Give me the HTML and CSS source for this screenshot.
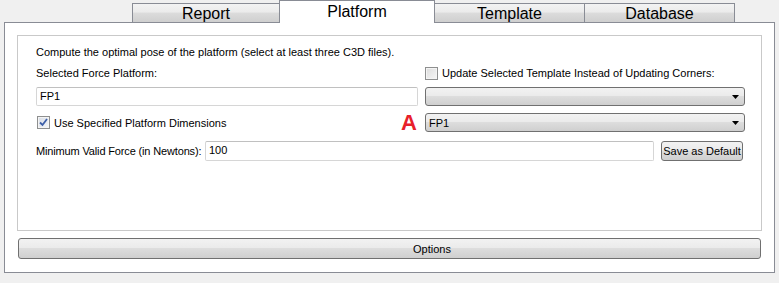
FILE: index.html
```html
<!DOCTYPE html>
<html>
<head>
<meta charset="utf-8">
<link rel="stylesheet" href="styles.css">
</head>
<body>
<div class="tabs">
  <div class="tab">Report</div>
  <div class="tab active">Platform</div>
  <div class="tab">Template</div>
  <div class="tab">Database</div>
</div>
<div class="pane">
  <div class="group">
    <div class="intro">Compute the optimal pose of the platform (select at least three C3D files).</div>
    <div class="grid">
      <div class="label">Selected Force Platform:</div>
      <label class="check"><span class="box"></span>Update Selected Template Instead of Updating Corners:</label>
      <div class="input">FP1</div>
      <div class="combo"><span></span><svg width="7" height="4" viewBox="0 0 7 4"><path d="M0 0H7L3.5 4Z" fill="#000"/></svg></div>
      <div class="leftrow">
        <label class="check"><span class="box checked"><svg width="11" height="11" viewBox="0 0 11 11"><path d="M2 5.5L4.5 8L9 2" fill="none" stroke="#3d5fa8" stroke-width="1.8"/></svg></span>Use Specified Platform Dimensions</label>
        <span class="marker">A</span>
      </div>
      <div class="combo"><span>FP1</span><svg width="7" height="4" viewBox="0 0 7 4"><path d="M0 0H7L3.5 4Z" fill="#000"/></svg></div>
    </div>
    <div class="forcerow">
      <span class="label">Minimum Valid Force (in Newtons):</span>
      <div class="input wide">100</div>
      <button class="btn">Save as Default</button>
    </div>
  </div>
  <button class="options">Options</button>
</div>
</body>
</html>
```

FILE: styles.css
```css
html, body {
  margin: 0;
  padding: 0;
}
body {
  background: #f0f0f0;
  font-family: "Liberation Sans", Arial, sans-serif;
  font-size: 11px;
  color: #000;
  width: 779px;
  height: 283px;
  overflow: hidden;
}
.tabs {
  display: flex;
  align-items: flex-end;
  height: 22px;
  padding-left: 132px;
  position: relative;
  z-index: 1;
}
.tab {
  box-sizing: border-box;
  width: 151px;
  height: 19px;
  margin-right: -1px;
  border: 1px solid #898c95;
  border-bottom: none;
  background: linear-gradient(#f3f3f3 0%, #ebebeb 45%, #dcdcdc 50%, #cfcfcf 100%);
  font-size: 16px;
  line-height: 19px;
  text-align: center;
  color: #000;
}
.tab:first-child { width: 148px; }
.tab.active {
  width: 156px;
  height: 23px;
  line-height: 22px;
  background: #fff;
  margin-bottom: -1px;
  position: relative;
}
.tab:last-child { width: 151px; }
.pane {
  box-sizing: border-box;
  margin: 0 4px;
  height: 251px;
  border: 1px solid #898c95;
  background: #fff;
  padding: 12px 12px 0 12px;
}
.group {
  box-sizing: border-box;
  height: 196px;
  border: 1px solid #c9c9c9;
  padding: 9px 15px 0 18px;
}
.intro {
  height: 17px;
  line-height: 14px;
}
.grid {
  display: grid;
  grid-template-columns: 382px 320px;
  column-gap: 7px;
  grid-template-rows: 22px 19px 23px;
  row-gap: 3px;
  align-items: center;
}
.label {
  white-space: nowrap;
}
.check {
  display: flex;
  align-items: center;
  gap: 4px;
  white-space: nowrap;
}
.box {
  box-sizing: border-box;
  width: 13px;
  height: 13px;
  border: 1px solid #8e8f8f;
  background: linear-gradient(135deg, #dcdcdc, #f6f6f6);
  display: flex;
  align-items: center;
  justify-content: center;
  box-shadow: inset 0 0 0 1px #f4f4f4;
}
.box.checked {
  background: linear-gradient(135deg, #d8dde6, #f4f6f9);
}
.input {
  box-sizing: border-box;
  height: 19px;
  border: 1px solid #d6d6d6;
  border-top-color: #c0c0c0;
  border-radius: 2px;
  background: #fff;
  padding-left: 3px;
  line-height: 17px;
}
.combo {
  box-sizing: border-box;
  height: 19px;
  border: 1px solid #707070;
  border-radius: 3px;
  background: linear-gradient(#f2f2f2 0%, #ebebeb 45%, #dddddd 50%, #cfcfcf 100%);
  display: flex;
  align-items: center;
  justify-content: space-between;
  padding: 0 5px 0 3px;
}
.grid > :nth-child(5),
.grid > :nth-child(6) {
  align-self: end;
}
.leftrow {
  height: 19px;
  display: flex;
  align-items: center;
  justify-content: space-between;
  padding-left: 1px;
}
.marker {
  color: #e8202a;
  font-weight: bold;
  font-size: 22px;
  line-height: 19px;
  margin-right: 1px;
}
.forcerow {
  display: flex;
  align-items: center;
  margin-top: 8px;
}
.forcerow .label {
  width: 169px;
  letter-spacing: -0.15px;
}
.input.wide {
  width: 449px;
  height: 20px;
}
.btn {
  margin-left: 7px;
  box-sizing: border-box;
  height: 20px;
  width: 82px;
  border: 1px solid #707070;
  border-radius: 3px;
  background: linear-gradient(#f2f2f2 0%, #ebebeb 45%, #dddddd 50%, #cfcfcf 100%);
  font-family: inherit;
  font-size: 11px;
  padding: 0;
  color: #000;
  margin-top: 1px;
}
.options {
  display: block;
  box-sizing: border-box;
  margin: 7px 0 0 1px;
  width: 743px;
  height: 21px;
  border: 1px solid #707070;
  border-radius: 3px;
  background: linear-gradient(#f2f2f2 0%, #ebebeb 45%, #dddddd 50%, #cfcfcf 100%);
  font-family: inherit;
  font-size: 11px;
  color: #000;
  padding: 0 0 0 394px;
  text-align: left;
}
```
